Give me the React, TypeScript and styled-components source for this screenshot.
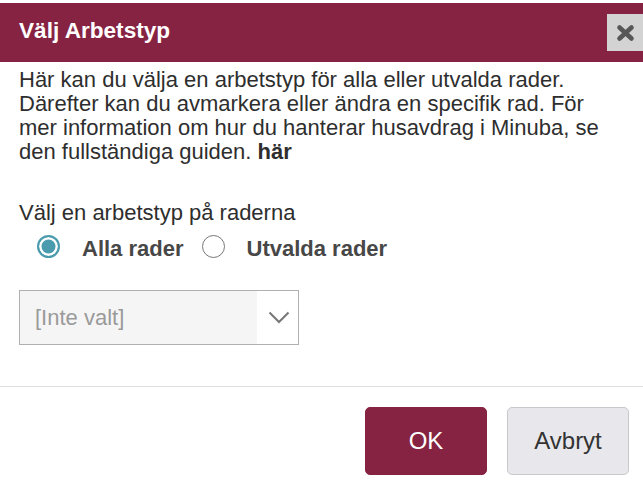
import React, { useState } from "react";
import styled, { createGlobalStyle } from "styled-components";

const Global = createGlobalStyle`
  html, body { margin: 0; padding: 0; background: #fff; }
  body { font-family: "Liberation Sans", Arial, sans-serif; color: #2e2e2e; }
  * { box-sizing: border-box; }
`;

const Dialog = styled.div`
  width: 643px;
  padding-top: 3px;
  display: flex;
  flex-direction: column;
`;

const Header = styled.div`
  height: 59px;
  background: #872342;
  display: flex;
  align-items: center;
  justify-content: space-between;
  padding-left: 19px;
`;

const Title = styled.h1`
  margin: 0;
  font-size: 22.6px;
  font-weight: bold;
  color: #fff;
  line-height: 24px;
  margin-top: -4px;
`;

const CloseButton = styled.button`
  width: 36px;
  height: 37px;
  border: none;
  padding: 0;
  background: #d3d3d3;
  display: flex;
  align-items: center;
  justify-content: center;
  cursor: pointer;
`;

const Body = styled.div`
  padding: 6px 20px 0 19px;
  display: flex;
  flex-direction: column;
`;

const Intro = styled.p`
  margin: 0;
  font-size: 22px;
  line-height: 24px;
  color: #2e2e2e;
`;

const Strong = styled.b`
  font-weight: bold;
`;

const Label = styled.div`
  margin-top: 37px;
  font-size: 22px;
  line-height: 24px;
  color: #2e2e2e;
`;

const RadioRow = styled.div`
  display: flex;
  align-items: center;
  gap: 18px;
  margin-top: 10px;
  padding-left: 18px;
  height: 24px;
`;

const RadioItem = styled.label`
  display: flex;
  align-items: center;
  gap: 22px;
  cursor: pointer;
`;

const RadioCircle = styled.span<{ $checked: boolean }>`
  width: 23px;
  height: 23px;
  border-radius: 50%;
  flex: none;
  margin-top: -2px;
  border: ${(p) => (p.$checked ? "2.5px solid #4a9bad" : "1.5px solid #777")};
  background: ${(p) => (p.$checked ? "#4a9bad" : "#fff")};
  box-shadow: ${(p) => (p.$checked ? "inset 0 0 0 2.5px #fff" : "none")};
`;

const RadioText = styled.span`
  font-size: 22px;
  font-weight: bold;
  color: #474747;
  line-height: 24px;
  margin-top: 4px;
`;

const Select = styled.div`
  margin-top: 31px;
  width: 280px;
  height: 55px;
  border: 1px solid #b0b0b0;
  display: flex;
`;

const SelectValue = styled.div`
  flex: 1;
  background: #f5f5f5;
  color: #9a9a9a;
  font-size: 22px;
  display: flex;
  align-items: center;
  padding-left: 15px;
`;

const SelectArrow = styled.div`
  width: 41px;
  background: #fff;
  display: flex;
  align-items: center;
  justify-content: center;
  padding-left: 2px;
`;

const Divider = styled.hr`
  margin: 41px 0 0 0;
  border: none;
  border-top: 1px solid #dedede;
  height: 0;
`;

const Footer = styled.div`
  display: flex;
  justify-content: flex-end;
  gap: 20px;
  padding: 20px 14px 0 0;
`;

const Button = styled.button<{ $primary?: boolean }>`
  width: 122px;
  height: 68px;
  border-radius: 5px;
  font-family: "Liberation Sans", Arial, sans-serif;
  font-size: 24px;
  cursor: pointer;
  border: 1px solid ${(p) => (p.$primary ? "#872342" : "#c9c9cd")};
  background: ${(p) => (p.$primary ? "#872342" : "#e8e8ec")};
  color: ${(p) => (p.$primary ? "#fff" : "#333")};
`;

export default function App() {
  const [mode, setMode] = useState<"all" | "selected">("all");
  return (
    <>
      <Global />
      <Dialog>
        <Header>
          <Title>Välj Arbetstyp</Title>
          <CloseButton aria-label="Stäng">
            <svg width="19" height="18" viewBox="0 0 19 18">
              <path
                d="M3.5 3.5 L15.5 14.5 M15.5 3.5 L3.5 14.5"
                stroke="#575757"
                strokeWidth="4.6"
                strokeLinecap="round"
              />
            </svg>
          </CloseButton>
        </Header>
        <Body>
          <Intro>
            Här kan du välja en arbetstyp för alla eller utvalda rader. Därefter kan du
            avmarkera eller ändra en specifik rad. För mer information om hur du hanterar
            husavdrag i Minuba, se den fullständiga guiden.{" "}
            <Strong>här</Strong>
          </Intro>
          <Label>Välj en arbetstyp på raderna</Label>
          <RadioRow>
            <RadioItem onClick={() => setMode("all")}>
              <RadioCircle $checked={mode === "all"} />
              <RadioText>Alla rader</RadioText>
            </RadioItem>
            <RadioItem onClick={() => setMode("selected")}>
              <RadioCircle $checked={mode === "selected"} />
              <RadioText>Utvalda rader</RadioText>
            </RadioItem>
          </RadioRow>
          <Select>
            <SelectValue>[Inte valt]</SelectValue>
            <SelectArrow>
              <svg width="22" height="13" viewBox="0 0 22 13">
                <path d="M1.5 1.5 L11 11 L20.5 1.5" fill="none" stroke="#777" strokeWidth="2" />
              </svg>
            </SelectArrow>
          </Select>
        </Body>
        <Divider />
        <Footer>
          <Button $primary>OK</Button>
          <Button>Avbryt</Button>
        </Footer>
      </Dialog>
    </>
  );
}
